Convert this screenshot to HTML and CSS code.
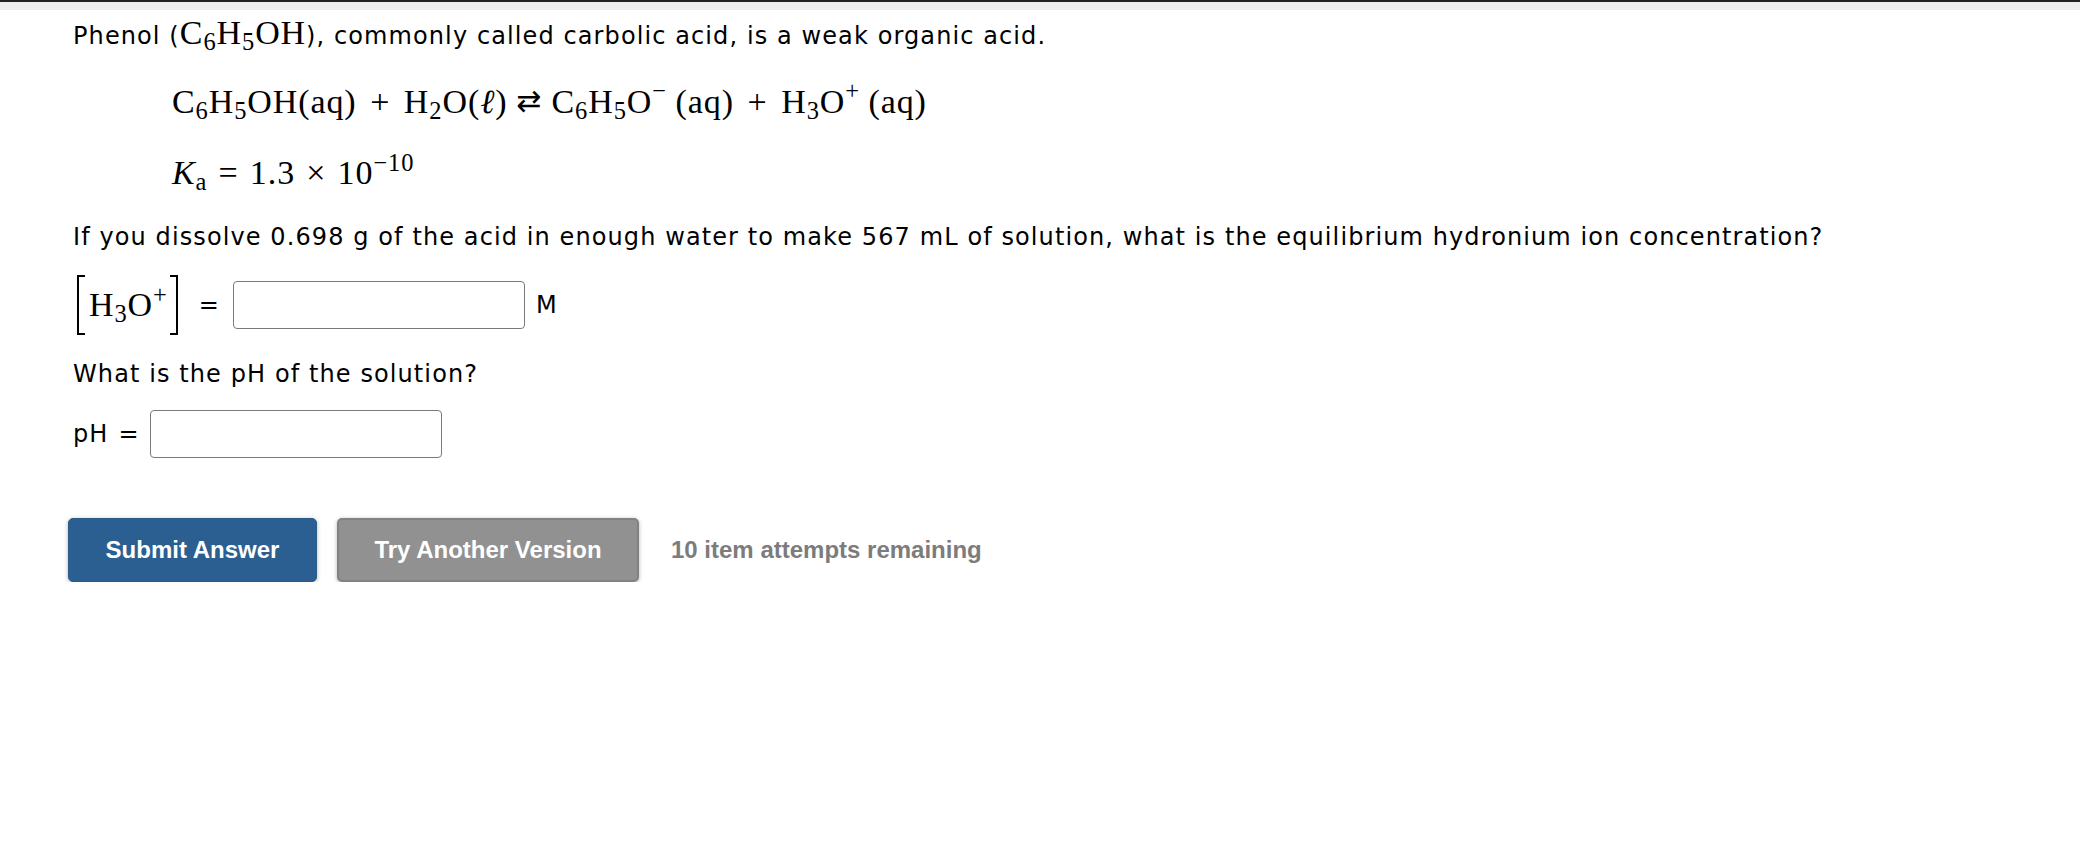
FILE: index.html
```html
<!DOCTYPE html>
<html lang="en">
<head>
<meta charset="utf-8">
<title>Phenol question</title>
<link rel="stylesheet" href="styles.css">
</head>
<body>
<div class="topbar"></div>
<main class="question">
  <p class="text intro">Phenol (<span class="math">C<sub>6</sub>H<sub>5</sub>OH</span>), commonly called carbolic acid, is a weak organic acid.</p>
  <div class="math-block">
    <div class="eq math">C<sub>6</sub>H<sub>5</sub>OH(aq)<span class="op">+</span>H<sub>2</sub>O(<i>ℓ</i>)<span class="op rel arrow">⇄</span>C<sub>6</sub>H<sub>5</sub>O<sup>−</sup>(aq)<span class="op">+</span>H<sub>3</sub>O<sup>+</sup>(aq)</div>
    <div class="eq math ka"><i>K</i><sub>a</sub><span class="op rel">=</span>1.3<span class="op">×</span>10<sup>−10</sup></div>
  </div>
  <p class="text prompt">If you dissolve 0.698 g of the acid in enough water to make 567 mL of solution, what is the equilibrium hydronium ion concentration?</p>
  <div class="answer-row conc">
    <span class="bracket-expr math"><span class="br br-l"></span><span class="br-inner">H<sub>3</sub>O<sup>+</sup></span><span class="br br-r"></span></span>
    <span class="text eqsign">=</span>
    <input class="answer" type="text" aria-label="hydronium concentration">
    <span class="text unit">M</span>
  </div>
  <p class="text prompt2">What is the pH of the solution?</p>
  <div class="answer-row ph">
    <span class="text label">pH</span>
    <span class="text eqsign">=</span>
    <input class="answer" type="text" aria-label="pH">
  </div>
  <div class="actions">
    <button class="btn btn-submit" type="button">Submit Answer</button>
    <button class="btn btn-try" type="button">Try Another Version</button>
    <span class="attempts">10 item attempts remaining</span>
  </div>
</main>
</body>
</html>
```
FILE: styles.css
```css
html, body {
  margin: 0;
  padding: 0;
  background: #ffffff;
}

.topbar {
  height: 2px;
  background: #232323;
  border-bottom: 8px solid #eeeeee;
}

.question {
  padding-left: 73px;
  color: #000;
}

.text {
  font-family: "DejaVu Sans", Verdana, sans-serif;
  font-size: 24px;
  letter-spacing: 1.1px;
}

p {
  margin: 0;
  line-height: 32px;
}

.math {
  font-family: "Liberation Serif", "DejaVu Serif", serif;
  font-size: 34px;
  letter-spacing: 0.9px;
}

.math sub, .math sup {
  font-size: 72%;
  line-height: 0;
}

.math sub {
  vertical-align: -0.24em;
}

.math sup {
  vertical-align: 0.55em;
  margin-right: 0.35em;
}

.op {
  display: inline-block;
  margin: 0 0.4em;
}

.ka .op {
  margin: 0 0.33em;
}

.arrow {
  font-family: "DejaVu Sans", sans-serif;
  font-size: 30px;
  margin: 0 0.3em;
  vertical-align: 0.06em;
}

.intro {
  margin-top: 7px;
}

.math-block {
  padding-left: 99px;
  margin-top: 29px;
}

.eq {
  line-height: 40px;
  white-space: nowrap;
}

.eq i {
  font-style: italic;
}

.ka {
  margin-top: 31px;
}

.ka sup {
  margin-right: 0;
}

.prompt {
  margin-top: 28px;
}

.answer-row {
  display: flex;
  align-items: center;
}

.conc {
  margin-top: 23px;
  height: 58px;
}

.bracket-expr {
  display: inline-flex;
  align-items: center;
  height: 58px;
  margin-left: 4px;
}

.br {
  width: 6px;
  height: 56px;
  border: 2px solid #000;
}

.br-l {
  border-right: none;
}

.br-r {
  border-left: none;
}

.br-inner {
  padding: 0 2px 0 4px;
}

.br-inner sup {
  margin-right: 0;
}

.conc .eqsign {
  margin: 0 13px 0 21px;
}

.answer {
  width: 292px;
  height: 48px;
  box-sizing: border-box;
  border: 1.5px solid #7a7a7a;
  border-radius: 4px;
  padding: 0 8px;
  margin: 0;
  background: #fff;
}

.unit {
  margin-left: 11px;
}

.prompt2 {
  margin-top: 24px;
}

.ph {
  margin-top: 20px;
}

.ph .eqsign {
  margin: 0 10px 0 10px;
}

.actions {
  display: flex;
  align-items: center;
  margin-top: 60px;
  margin-left: -5px;
}

.btn {
  font-family: "Liberation Sans", Arial, sans-serif;
  font-weight: bold;
  font-size: 24px;
  color: #fff;
  height: 64px;
  border-radius: 5px;
  box-shadow: 0 1px 4px rgba(0, 0, 0, 0.3);
  cursor: pointer;
}

.btn-submit {
  width: 249px;
  background: #2b5f91;
  border: 1px solid #2a5c8c;
}

.btn-try {
  width: 302px;
  margin-left: 20px;
  background: #919191;
  border: 2px solid #828282;
}

.attempts {
  font-family: "Liberation Sans", Arial, sans-serif;
  font-weight: bold;
  font-size: 24px;
  color: #7c7c7c;
  margin-left: 32px;
}
```
